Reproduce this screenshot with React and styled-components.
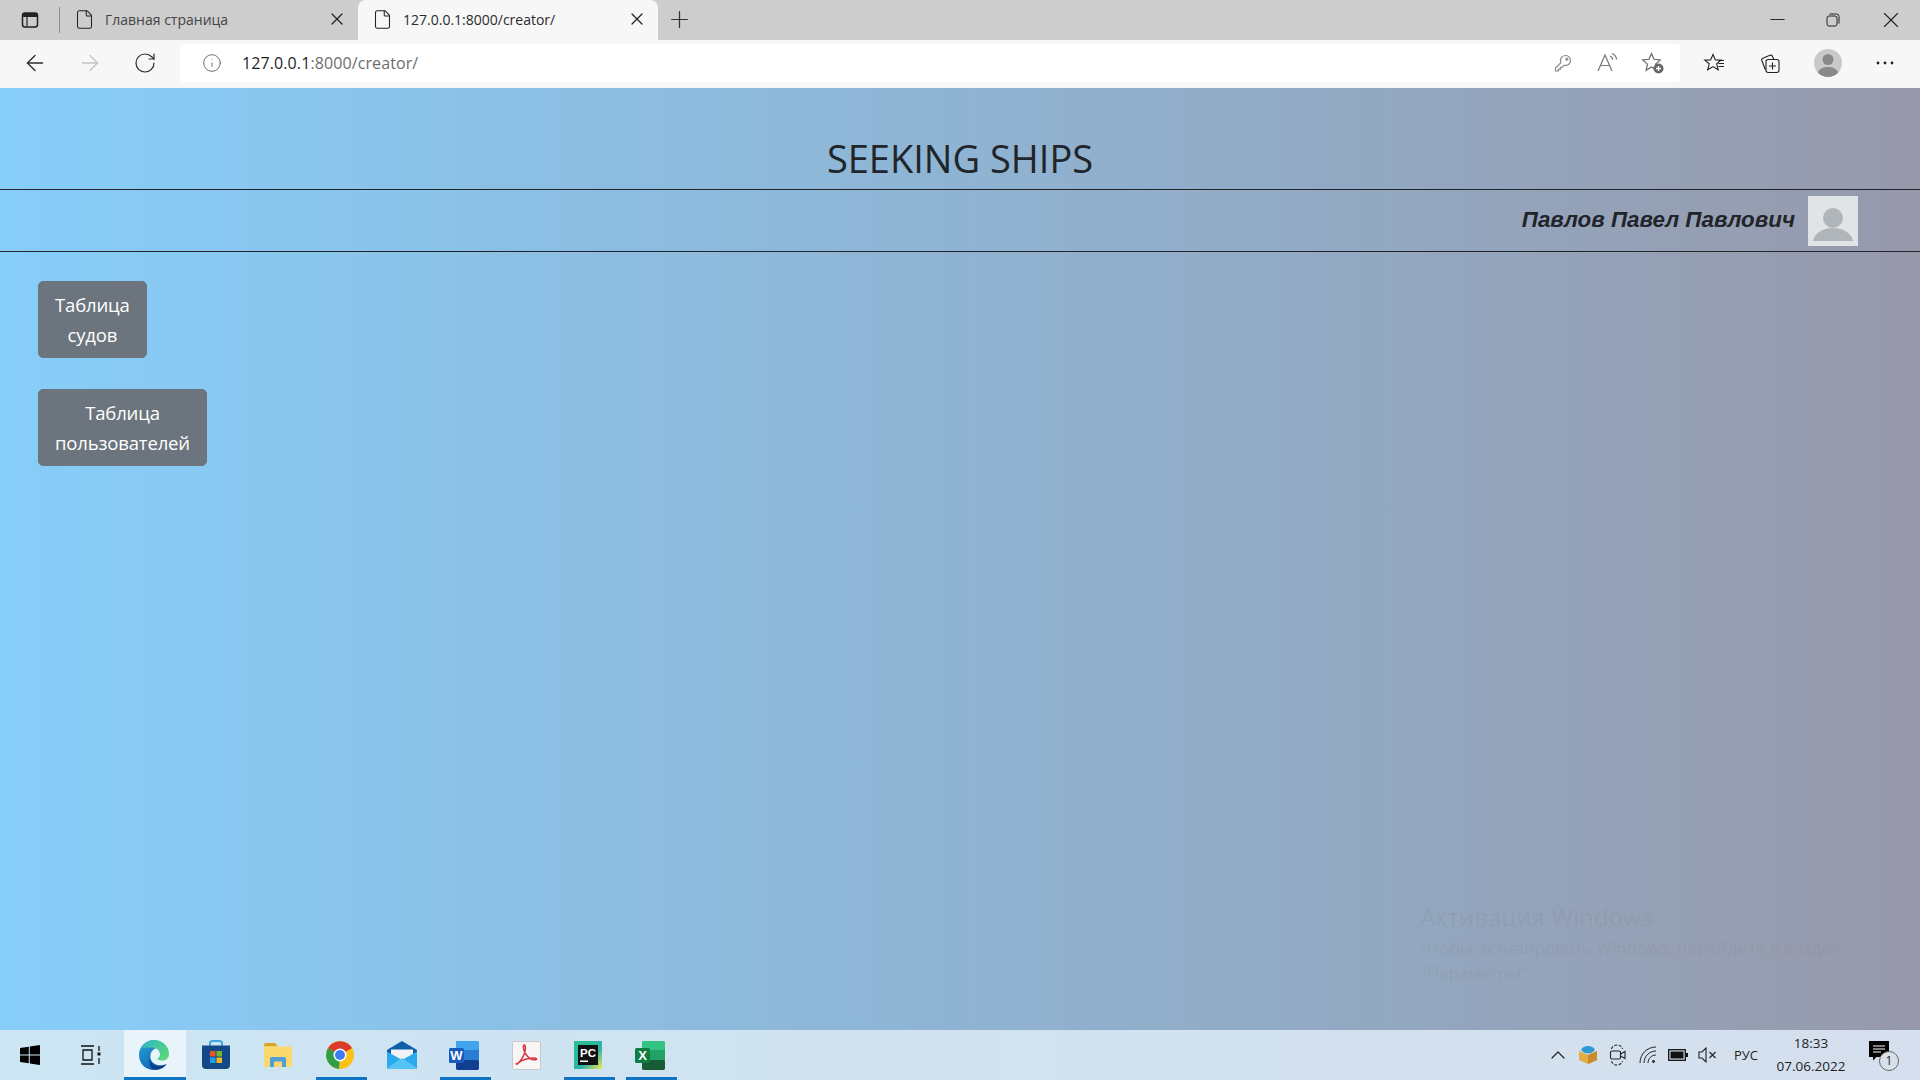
import React from "react";
import styled, { createGlobalStyle } from "styled-components";
import { ArrowLeft, ArrowRight, RotateCw, Info, X, Plus, Minus, File, ChevronUp } from "lucide-react";

const GlobalStyle = createGlobalStyle`
    html, body {
        margin: 0;
        padding: 0;
        height: 100%;
        overflow: hidden;
    }
    body {
        font-family: "Open Sans", "Liberation Sans", sans-serif;
    }
`
const Screen = styled.div`
    display: flex;
    flex-direction: column;
    width: 1920px;
    height: 1080px;
`

/* browser chrome */
const TabStrip = styled.div`
    display: flex;
    align-items: stretch;
    height: 40px;
    background: #cdcdcd;
`
const SidebarSlot = styled.div`
    display: flex;
    align-items: center;
    justify-content: center;
    width: 59px;
`
const TabDivider = styled.div`
    width: 1px;
    height: 26px;
    margin-top: 7px;
    background: #8f8f8f;
`
const Tab = styled.div`
    display: flex;
    align-items: center;
    gap: 10px;
    width: ${p => p.$active ? 300 : 298}px;
    padding: 0 11px 2px 14px;
    box-sizing: border-box;
    color: #222;
    background: ${p => p.$active ? "#f7f7f7" : "transparent"};
    border-radius: 8px 8px 0 0;
    svg { flex: none; }
`
const TabTitle = styled.span`
    flex: 1;
    font-size: 14px;
    color: ${p => p.$active ? "#2b2b2b" : "#444"};
    white-space: nowrap;
`
const NewTab = styled.div`
    display: flex;
    align-items: center;
    justify-content: center;
    width: 42px;
    padding-bottom: 1px;
    color: #333;
`
const WindowControls = styled.div`
    display: flex;
    margin-left: auto;
`
const WindowButton = styled.div`
    display: flex;
    align-items: center;
    justify-content: center;
    width: ${p => p.$w}px;
    padding-bottom: 1px;
    color: #222;
`
const Toolbar = styled.div`
    display: flex;
    align-items: center;
    height: 48px;
    padding-left: 7px;
    padding-bottom: 3px;
    background: #f7f7f7;
    box-sizing: border-box;
`
const NavButton = styled.div`
    display: flex;
    justify-content: center;
    width: 55px;
    color: ${p => p.$disabled ? "#c4c4c4" : "#2c2c2c"};
`
const AddressBar = styled.div`
    display: flex;
    align-items: center;
    flex: 1;
    height: 38px;
    margin-left: 8px;
    padding: 0 5px 0 22px;
    background: #fff;
    border-radius: 4px;
`
const SiteInfo = styled.div`
    display: flex;
    width: 40px;
    color: #666;
`
const Url = styled.div`
    flex: 1;
    font-size: 16px;
    letter-spacing: 0.1px;
    color: #6d6d6d;
    b {
        font-weight: 400;
        color: #1f1f1f;
    }
`
const BarIcon = styled.div`
    display: flex;
    justify-content: center;
    width: 45px;
`
const ToolIcons = styled.div`
    display: flex;
    align-items: center;
    margin-left: 7px;
    padding-right: 9px;
`
const ToolIcon = styled.div`
    display: flex;
    justify-content: center;
    width: ${p => p.$w}px;
`

/* page */
const Content = styled.main`
    position: relative;
    flex: 1;
    color: #212529;
    background: linear-gradient(to right, #87cefa, #9799ab);
`
const Title = styled.h1`
    display: flex;
    align-items: flex-end;
    justify-content: center;
    height: 102px;
    margin: 0;
    padding-bottom: 5px;
    box-sizing: border-box;
    font-size: 38px;
    font-weight: 400;
    line-height: 52px;
    border-bottom: 1px solid #212529;
`
const UserRow = styled.div`
    display: flex;
    align-items: center;
    justify-content: flex-end;
    gap: 13px;
    height: 62px;
    padding-right: 62px;
    box-sizing: border-box;
    border-bottom: 1px solid #212529;
`
const UserName = styled.span`
    margin-top: -2px;
    font-family: "Liberation Sans", Arial, sans-serif;
    font-size: 22.4px;
    font-weight: 700;
    font-style: italic;
`
const Actions = styled.div`
    display: flex;
    flex-direction: column;
    align-items: flex-start;
    gap: 30.5px;
    padding: 29px 0 0 38px;
`
const ActionButton = styled.a`
    padding: 8px 16px;
    border: 1px solid #6c757d;
    border-radius: 5px;
    color: #fff;
    background: #6c757d;
    font-size: 18.5px;
    letter-spacing: -0.15px;
    line-height: 29.7px;
    text-align: center;
`
const Watermark = styled.div`
    position: absolute;
    left: 1420px;
    top: 811px;
    color: rgba(125, 125, 125, 0.18);
    font-size: 16.9px;
    line-height: 25px;
    white-space: nowrap;
    strong {
        display: block;
        font-size: 24px;
        font-weight: 400;
        line-height: 36px;
    }
`

/* taskbar */
const Taskbar = styled.footer`
    display: flex;
    height: 50px;
    background: linear-gradient(to right, #cce5f3, #d5dfed);
`
const TaskButton = styled.div`
    display: flex;
    align-items: center;
    justify-content: center;
    width: 62px;
    padding-right: 2px;
    box-sizing: border-box;
    background-color: ${p => p.$active ? "#e9f4fa" : "transparent"};
    background-image: ${p => p.$running ? "linear-gradient(#0f74c4, #0f74c4)" : "none"};
    background-repeat: no-repeat;
    background-position: bottom center;
    background-size: ${p => p.$active ? "62px" : "51px"} 3px;
`
const Tray = styled.div`
    display: flex;
    align-items: center;
    margin-left: auto;
    padding-right: 15px;
`
const TrayIcon = styled.div`
    display: flex;
    justify-content: center;
    width: 30px;
`
const Lang = styled.div`
    width: 46px;
    font-size: 13px;
    text-align: center;
    color: #222;
`
const Clock = styled.div`
    width: 84px;
    font-size: 13.5px;
    line-height: 23px;
    text-align: center;
    color: #222;
`
const Notifications = styled.div`
    position: relative;
    display: flex;
    justify-content: center;
    width: 52px;
    margin-top: -8px;
`
const CountBadge = styled.span`
    position: absolute;
    left: 26px;
    top: 10px;
    width: 18px;
    height: 18px;
    border: 1px solid #666;
    border-radius: 50%;
    background: #d8e0ea;
    font-size: 12px;
    line-height: 18px;
    text-align: center;
    color: #222;
`
const LogoText = styled.text`
    font-family: "Liberation Sans", Arial, sans-serif;
    font-weight: 700;
    fill: #fff;
`

function SidebarIcon() {
    return (
        <svg width="18" height="18" viewBox="0 0 18 18">
            <rect x="1.5" y="2" width="15" height="14" rx="2.5" fill="none" stroke="#222" strokeWidth="1.5" />
            <rect x="1.5" y="2" width="15" height="4" rx="1.5" fill="#222" />
            <path d="M6 6v9" stroke="#222" strokeWidth="1.2" />
        </svg>
    )
}

function KeyIcon() {
    return (
        <svg width="20" height="20" viewBox="0 0 20 20" fill="none" stroke="#8a8a8a" strokeWidth="1.2">
            <path d="M12.5 2.5a5 5 0 0 1 1.6 9.7c-1 .3-2 .3-2.9 0L9 14.4H7.3v1.9H5.4V18H2.5v-2.9l5.4-5.4a5 5 0 0 1 4.6-7.2z" />
            <circle cx="13.8" cy="6.2" r="1" />
        </svg>
    )
}

function ReadAloudIcon() {
    return (
        <svg width="24" height="22" viewBox="0 0 24 22" fill="none" stroke="#777" strokeWidth="1.2">
            <path d="M2 19 9 3l7 16M4.6 13.5h8.8" />
            <path d="M14 4c1.6.6 2.6 2 2.8 3.8M16 1.5c2.6 1 4.3 3.2 4.6 6" />
        </svg>
    )
}

function AddFavIcon() {
    return (
        <svg width="24" height="24" viewBox="0 0 24 24">
            <path d="M10.5 2.5 13 8.3l6.3.6-4.8 4.2 1.4 6.1-5.4-3.2-5.4 3.2 1.4-6.1L1.7 8.9 8 8.3z" fill="none" stroke="#666" strokeWidth="1.2" />
            <circle cx="17.5" cy="17.5" r="5" fill="#666" />
            <path d="M17.5 15v5M15 17.5h5" stroke="#fff" strokeWidth="1.3" />
        </svg>
    )
}

function FavoritesIcon() {
    return (
        <svg width="24" height="24" viewBox="0 0 24 24" fill="none" stroke="#222" strokeWidth="1.1">
            <path d="M10 3.5 12.4 9l5.6.1-4.3 3.7 1.5 6-5.2-3.2-5.3 3.2 1.5-6L1.8 9.1 7.6 9z" />
            <path d="M15.5 9.5H21M15.5 12.5H21M15.5 15.5H21" />
        </svg>
    )
}

function CollectionsIcon() {
    return (
        <svg width="24" height="24" viewBox="0 0 24 24" fill="none" stroke="#222" strokeWidth="1.1">
            <path d="M7.5 19 3.8 9.5c-.4-1 .1-2 1-2.3L12 4.3c1-.4 2 .1 2.4.9l1.3 3" />
            <rect x="8" y="8.5" width="13" height="13" rx="2.2" fill="#f7f7f7" />
            <path d="M14.5 11.5v7M11 15h7" />
        </svg>
    )
}

function ProfileIcon() {
    return (
        <svg width="28" height="28" viewBox="0 0 28 28">
            <circle cx="14" cy="14" r="14" fill="#c9c9c9" />
            <circle cx="14" cy="10.5" r="5.5" fill="#8a8a8a" />
            <path d="M3.8 23.5c1.5-3.6 5-5.5 10.2-5.5s8.700 1.900 10.200 5.500A14 14 0 0 1 14 28a14 14 0 0 1-10.200-4.500z" fill="#8a8a8a" />
        </svg>
    )
}

function MoreIcon() {
    return (
        <svg width="18" height="4" viewBox="0 0 18 4" fill="#222">
            <circle cx="2" cy="2" r="1.4" />
            <circle cx="9" cy="2" r="1.4" />
            <circle cx="16" cy="2" r="1.4" />
        </svg>
    )
}

function RestoreIcon() {
    return (
        <svg width="14" height="14" viewBox="0 0 14 14" fill="none" stroke="#222" strokeWidth="1">
            <rect x="1" y="3" width="10" height="10" rx="2" />
            <path d="M3.5 1h7a2.5 2.5 0 0 1 2.5 2.5v7" />
        </svg>
    )
}

function AvatarImage() {
    return (
        <svg width="50" height="50" viewBox="0 0 50 50">
            <rect width="50" height="50" fill="#e1e4e7" />
            <circle cx="25" cy="22" r="10" fill="#b0b5ba" />
            <path d="M5 45c1-7 9-13 20-13s19 6 20 13z" fill="#b0b5ba" />
        </svg>
    )
}

function WindowsLogo() {
    return (
        <svg width="20" height="20" viewBox="0 0 20 20" fill="#000">
            <path d="M0 3.1 8.8 1.700v7.800H0zM9.800 1.500 20 0v9.500H9.800zM0 10.500h8.800v7.800L0 16.900zM9.800 10.500H20V20L9.800 18.500z" />
        </svg>
    )
}

function TaskViewIcon() {
    return (
        <svg width="24" height="20" viewBox="0 0 24 20" fill="none" stroke="#111" strokeWidth="1.3">
            <path d="M1 1h13M1 19h13M3 5h9v10H3zM19 1v5M19 13v6" />
            <rect x="17.5" y="7.5" width="3" height="3" fill="#111" stroke="none" />
        </svg>
    )
}

function EdgeLogo() {
    return (
        <svg width="32" height="32" viewBox="0 0 32 32">
            <defs>
                <linearGradient id="edgeBlue" x1="0" y1="0" x2="0.6" y2="1">
                    <stop offset="0" stopColor="#2ba7d8" />
                    <stop offset="1" stopColor="#0b62b3" />
                </linearGradient>
                <linearGradient id="edgeGreen" x1="0" y1="0" x2="1" y2="1">
                    <stop offset="0" stopColor="#2fb7c8" />
                    <stop offset="1" stopColor="#5fdc6a" />
                </linearGradient>
            </defs>
            <path d="M16 1C7.500 1 1 8 1 16c0 8.500 6.500 15 15 15 5 0 9.500-2 12.500-6-3 1.500-7 1.800-10.500.4C14 24 11.800 20 12.500 16 13 12 16 9.500 19 9c-1-3-2-8-3-8z" fill="url(#edgeBlue)" />
            <path d="M4 9C7 3.500 12 1 16.500 1 25 1 31 7.500 31 15c0 4-2.800 6.500-6.500 6.500-2.500 0-4.500-.8-5.500-1.800 2-.8 3-2.500 3-4.200 0-3.500-3.200-7-8-7C9.500 8.500 6 8 4 9z" fill="url(#edgeGreen)" />
            <path d="M11.500 17c-.4 5 3 9.500 8.500 10 3.500.3 6.500-.6 8.500-2-2 3.500-6.500 6-12 5.500C12 30 11 23 11.500 17z" fill="#0a3f88" />
        </svg>
    )
}

function StoreLogo() {
    return (
        <svg width="30" height="30" viewBox="0 0 30 30">
            <path d="M9 6V3.500C9 2 10 1 11.500 1h7C20 1 21 2 21 3.500V6" fill="none" stroke="#3fa7dc" strokeWidth="2" />
            <path d="M1 5.500h28V25a4 4 0 0 1-4 4H5a4 4 0 0 1-4-4z" fill="#134a85" />
            <rect x="9" y="11" width="5.5" height="5.5" fill="#e8552c" />
            <rect x="15.5" y="11" width="5.5" height="5.5" fill="#72b52e" />
            <rect x="9" y="17.5" width="5.5" height="5.5" fill="#1f9fe6" />
            <rect x="15.5" y="17.5" width="5.5" height="5.5" fill="#f8b621" />
        </svg>
    )
}

function ExplorerLogo() {
    return (
        <svg width="30" height="26" viewBox="0 0 30 26">
            <path d="M1 3c0-1 .8-2 2-2h9l3 3.500H1z" fill="#d9a521" />
            <path d="M1 4.500h27c.6 0 1 .4 1 1V24c0 .6-.4 1-1 1H2c-.6 0-1-.4-1-1z" fill="#fbd96f" />
            <path d="M7 25v-8c0-1.500 1-2 2-2h12c1 0 2 .5 2 2v8h-4v-5.500h-8V25z" fill="#4f9fd8" />
        </svg>
    )
}

function ChromeLogo() {
    return (
        <svg width="28" height="28" viewBox="0 0 28 28">
            <circle cx="14" cy="14" r="14" fill="#fbc116" />
            <path d="M14 14 2 7A14 14 0 0 1 26.100 7z" fill="#db3a2f" />
            <path d="M14 14 2 7A14 14 0 0 0 13 28z" fill="#2f9e4c" />
            <circle cx="14" cy="14" r="6.5" fill="#fff" />
            <circle cx="14" cy="14" r="5" fill="#3b7df0" />
        </svg>
    )
}

function MailLogo() {
    return (
        <svg width="30" height="28" viewBox="0 0 30 28">
            <path d="M0 9 15 0l15 9v3L15 20 0 12z" fill="#0f5fa8" />
            <path d="M4 8.500h22V14l-11 6-11-6z" fill="#f1f3f5" />
            <path d="M0 10.500 15 19l15-8.500V27a1 1 0 0 1-1 1H1a1 1 0 0 1-1-1z" fill="#2aa9ee" />
            <path d="M0 27 15 17l15 10v1H0z" fill="#55c3f5" />
        </svg>
    )
}

function OfficeLogo({ letter, back, mid, light, front }) {
    return (
        <svg width="30" height="29" viewBox="0 0 30 29">
            <rect x="7" y="0" width="23" height="29" rx="2" fill={mid} />
            <rect x="7" y="0" width="23" height="9" rx="2" fill={light} />
            <rect x="7" y="19" width="23" height="10" rx="2" fill={back} />
            <rect x="0" y="7" width="15" height="15" rx="1.5" fill={front} />
            <LogoText x="7.5" y="19" fontSize="13" textAnchor="middle">{letter}</LogoText>
        </svg>
    )
}

function AcrobatLogo() {
    return (
        <svg width="29" height="29" viewBox="0 0 29 29">
            <rect x="0.5" y="0.5" width="28" height="28" rx="1.5" fill="#f8f6f4" stroke="#c9c9c9" />
            <path d="M4.500 23c3-1 5.500-5 7.500-9.500 1.500-3.500 2-8 .8-9.300-1.300-1-2 2-.8 5.300 1.500 4 5 8.500 8 9 2.500.4 5 .6 4.500-.7-.5-1.300-6-1.100-11 .5-4 1.300-7.500 3.500-8.500 5z" fill="none" stroke="#d9333f" strokeWidth="1.5" />
        </svg>
    )
}

function PyCharmLogo() {
    return (
        <svg width="28" height="28" viewBox="0 0 28 28">
            <defs>
                <linearGradient id="pcEdge" x1="0" y1="0" x2="1" y2="1">
                    <stop offset="0" stopColor="#27c28c" />
                    <stop offset="0.6" stopColor="#2bb3a8" />
                    <stop offset="1" stopColor="#f2e84a" />
                </linearGradient>
            </defs>
            <rect width="28" height="28" fill="url(#pcEdge)" />
            <rect x="4" y="4" width="20" height="20" fill="#111" />
            <LogoText x="6" y="15.5" fontSize="11.5">PC</LogoText>
            <rect x="6" y="19.5" width="8" height="1.5" fill="#fff" />
        </svg>
    )
}

function CrateIcon() {
    return (
        <svg width="20" height="20" viewBox="0 0 20 20">
            <path d="M1 6 10 10l9-4v9l-9 4-9-4z" fill="#e3ad45" />
            <path d="M10 10v9l9-4V6z" fill="#c78d2c" />
            <path d="M3 5c1-3 5-4.500 8-4 3 .3 5 2 6 4-2 2.500-4.500 3.500-7 3.500S5 7.500 3 5z" fill="#2f9bd0" />
        </svg>
    )
}

function MeetIcon() {
    return (
        <svg width="18" height="22" viewBox="0 0 18 22" fill="none" stroke="#222" strokeWidth="1.1">
            <path d="M2.500 5C3 2.500 5.500 1 8 1s5 1.500 5.500 4M2.500 17c.5 2.500 3 4 5.500 4s5-1.500 5.500-4" strokeDasharray="3 1.5" />
            <rect x="1.5" y="7" width="10" height="8" rx="1.5" />
            <path d="M11.500 10l4.500-2.500v7L11.500 12z" />
        </svg>
    )
}

function WifiIcon() {
    return (
        <svg width="18" height="18" viewBox="0 0 18 18" fill="none" stroke="#222" strokeWidth="1">
            <path d="M1 17C1 8 8 1 17 1M5 17c0-6.600 5.400-12 12-12M9 17c0-4.400 3.600-8 8-8" />
            <circle cx="14.5" cy="15.5" r="1.4" fill="#222" stroke="none" />
        </svg>
    )
}

function BatteryIcon() {
    return (
        <svg width="20" height="12" viewBox="0 0 20 12">
            <rect x="0.7" y="0.7" width="16.6" height="10.6" fill="none" stroke="#111" strokeWidth="1.3" />
            <rect x="2.5" y="2.5" width="13" height="7" fill="#111" />
            <rect x="18" y="4" width="2" height="4" fill="#111" />
        </svg>
    )
}

function MutedIcon() {
    return (
        <svg width="20" height="16" viewBox="0 0 20 16" fill="none" stroke="#222" strokeWidth="1.1">
            <path d="M1 5h3l4-4v14l-4-4H1z" />
            <path d="M11.500 5l6 6M17.500 5l-6 6" />
        </svg>
    )
}

function BubbleIcon() {
    return (
        <svg width="20" height="20" viewBox="0 0 20 20">
            <path d="M0 0h20v16H7.500L4 19.500V16H0z" fill="#000" />
            <path d="M4 5h12M4 8h12M4 11h8" stroke="#fff" strokeWidth="1" />
        </svg>
    )
}

function App() {
    return (
        <Screen>
            <GlobalStyle />
            <TabStrip>
                <SidebarSlot><SidebarIcon /></SidebarSlot>
                <TabDivider />
                <Tab>
                    <File size={21} strokeWidth={1.2} />
                    <TabTitle>Главная страница</TabTitle>
                    <X size={20} strokeWidth={1.5} />
                </Tab>
                <Tab $active>
                    <File size={21} strokeWidth={1.2} />
                    <TabTitle $active>127.0.0.1:8000/creator/</TabTitle>
                    <X size={20} strokeWidth={1.5} />
                </Tab>
                <NewTab><Plus size={27} strokeWidth={1.1} /></NewTab>
                <WindowControls>
                    <WindowButton $w={56}><Minus size={23} strokeWidth={1} /></WindowButton>
                    <WindowButton $w={56}><RestoreIcon /></WindowButton>
                    <WindowButton $w={59}><X size={26} strokeWidth={1} /></WindowButton>
                </WindowControls>
            </TabStrip>
            <Toolbar>
                <NavButton><ArrowLeft size={26} strokeWidth={1.2} /></NavButton>
                <NavButton $disabled><ArrowRight size={26} strokeWidth={1.2} /></NavButton>
                <NavButton><RotateCw size={24} strokeWidth={1.2} /></NavButton>
                <AddressBar>
                    <SiteInfo><Info size={20} strokeWidth={1.1} /></SiteInfo>
                    <Url><b>127.0.0.1</b>:8000/creator/</Url>
                    <BarIcon><KeyIcon /></BarIcon>
                    <BarIcon><ReadAloudIcon /></BarIcon>
                    <BarIcon><AddFavIcon /></BarIcon>
                </AddressBar>
                <ToolIcons>
                    <ToolIcon $w={56}><FavoritesIcon /></ToolIcon>
                    <ToolIcon $w={54}><CollectionsIcon /></ToolIcon>
                    <ToolIcon $w={62}><ProfileIcon /></ToolIcon>
                    <ToolIcon $w={52}><MoreIcon /></ToolIcon>
                </ToolIcons>
            </Toolbar>
            <Content>
                <Title>SEEKING SHIPS</Title>
                <UserRow>
                    <UserName>Павлов Павел Павлович</UserName>
                    <AvatarImage />
                </UserRow>
                <Actions>
                    <ActionButton>Таблица<br />судов</ActionButton>
                    <ActionButton>Таблица<br />пользователей</ActionButton>
                </Actions>
                <Watermark>
                    <strong>Активация Windows</strong>
                    Чтобы активировать Windows, перейдите в раздел<br />
                    "Параметры".
                </Watermark>
            </Content>
            <Taskbar>
                <TaskButton><WindowsLogo /></TaskButton>
                <TaskButton><TaskViewIcon /></TaskButton>
                <TaskButton $active $running><EdgeLogo /></TaskButton>
                <TaskButton><StoreLogo /></TaskButton>
                <TaskButton><ExplorerLogo /></TaskButton>
                <TaskButton $running><ChromeLogo /></TaskButton>
                <TaskButton><MailLogo /></TaskButton>
                <TaskButton $running>
                    <OfficeLogo letter="W" back="#103f91" mid="#2b7cd3" light="#41a5ee" front="#185abd" />
                </TaskButton>
                <TaskButton><AcrobatLogo /></TaskButton>
                <TaskButton $running><PyCharmLogo /></TaskButton>
                <TaskButton $running>
                    <OfficeLogo letter="X" back="#185c37" mid="#21a366" light="#33c481" front="#107c41" />
                </TaskButton>
                <Tray>
                    <TrayIcon><ChevronUp size={24} strokeWidth={1.2} color="#222" /></TrayIcon>
                    <TrayIcon><CrateIcon /></TrayIcon>
                    <TrayIcon><MeetIcon /></TrayIcon>
                    <TrayIcon><WifiIcon /></TrayIcon>
                    <TrayIcon><BatteryIcon /></TrayIcon>
                    <TrayIcon><MutedIcon /></TrayIcon>
                    <Lang>РУС</Lang>
                    <Clock>18:33<br />07.06.2022</Clock>
                    <Notifications>
                        <BubbleIcon />
                        <CountBadge>1</CountBadge>
                    </Notifications>
                </Tray>
            </Taskbar>
        </Screen>
    )
}

export default App;
